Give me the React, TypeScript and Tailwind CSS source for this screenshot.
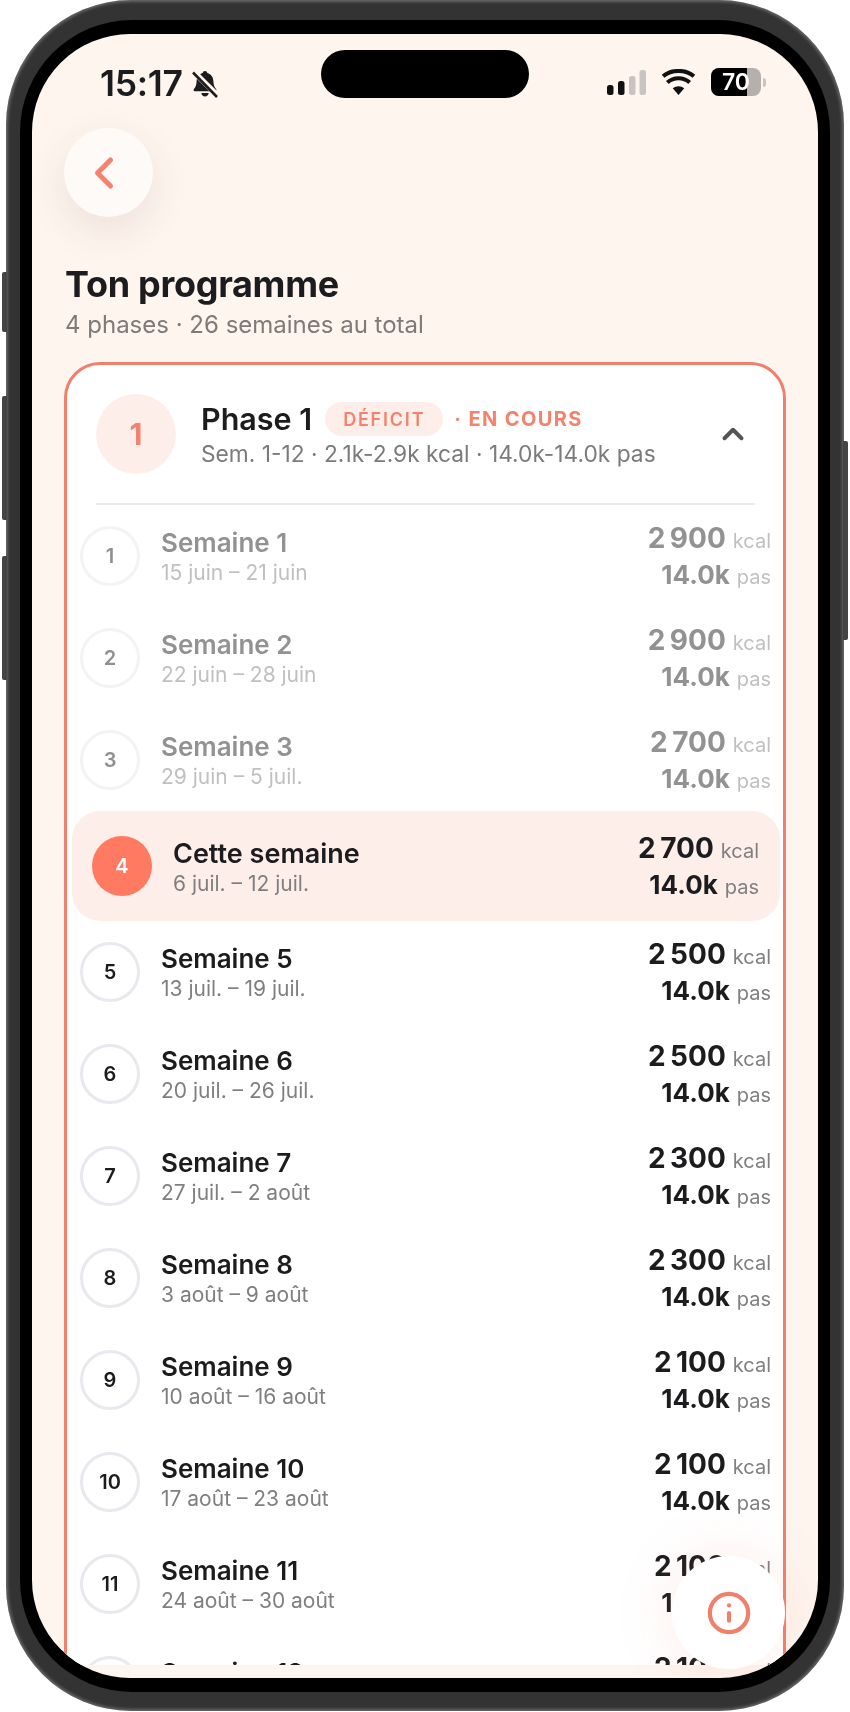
import React from "react";
import { ChevronLeft, ChevronUp, Info } from "lucide-react";

type Week = { n: number; title: string; dates: string; kcal: string; state: "past" | "now" | "next" };

const weeks: Week[] = [
  { n: 1, title: "Semaine 1", dates: "15 juin – 21 juin", kcal: "2\u202F900", state: "past" },
  { n: 2, title: "Semaine 2", dates: "22 juin – 28 juin", kcal: "2\u202F900", state: "past" },
  { n: 3, title: "Semaine 3", dates: "29 juin – 5 juil.", kcal: "2\u202F700", state: "past" },
  { n: 4, title: "Cette semaine", dates: "6 juil. – 12 juil.", kcal: "2\u202F700", state: "now" },
  { n: 5, title: "Semaine 5", dates: "13 juil. – 19 juil.", kcal: "2\u202F500", state: "next" },
  { n: 6, title: "Semaine 6", dates: "20 juil. – 26 juil.", kcal: "2\u202F500", state: "next" },
  { n: 7, title: "Semaine 7", dates: "27 juil. – 2 août", kcal: "2\u202F300", state: "next" },
  { n: 8, title: "Semaine 8", dates: "3 août – 9 août", kcal: "2\u202F300", state: "next" },
  { n: 9, title: "Semaine 9", dates: "10 août – 16 août", kcal: "2\u202F100", state: "next" },
  { n: 10, title: "Semaine 10", dates: "17 août – 23 août", kcal: "2\u202F100", state: "next" },
  { n: 11, title: "Semaine 11", dates: "24 août – 30 août", kcal: "2\u202F100", state: "next" },
  { n: 12, title: "Semaine 12", dates: "31 août – 6 sept.", kcal: "2\u202F100", state: "next" },
];

function Row({ w }: { w: Week }) {
  const now = w.state === "now";
  const past = w.state === "past";
  return (
    <div
      className={
        now
          ? "ml-[5px] mr-[3px] h-[110px] rounded-[28px] bg-[#fdeeea] flex items-center pl-[20px] pr-[21px]"
          : "h-[102px] flex items-center pl-[13px] pr-[12px]"
      }
    >
      <div
        className={
          now
            ? "w-[60px] h-[60px] rounded-full bg-[#ff7a60] text-white flex items-center justify-center text-[20px] font-semibold shrink-0"
            : past
              ? "w-[60px] h-[60px] rounded-full border-[3px] border-[#f2f3f5] text-[#8f8f8f] flex items-center justify-center text-[20px] font-semibold shrink-0"
              : "w-[60px] h-[60px] rounded-full border-[3px] border-[#e8e9ee] text-[#1c1c1e] flex items-center justify-center text-[20px] font-semibold shrink-0"
        }
      >
        {w.n}
      </div>
      <div className="ml-[21px] flex-1">
        <div
          className={
            now
              ? "mt-[2px] text-[27px] leading-[30px] font-semibold text-[#1c1c1e]"
              : past
                ? "mt-[1px] text-[26px] leading-[30px] font-semibold text-[#929292]"
                : "mt-[1px] text-[26px] leading-[30px] font-semibold text-[#1c1c1e]"
          }
        >
          {w.title}
        </div>
        <div
          className={
            past
              ? "mt-[2px] text-[21px] leading-[25px] text-[#c0c0c0]"
              : "mt-[2px] text-[21px] leading-[25px] text-[#7f7f7f]"
          }
        >
          {w.dates}
        </div>
      </div>
      <div className="flex flex-col items-end">
        <div className="h-[37px] flex items-baseline">
          <span
            className={
              past
                ? "text-[28px] leading-[36px] font-bold tracking-[0.5px] text-[#929292]"
                : "text-[28px] leading-[36px] font-bold tracking-[0.5px] text-[#1c1c1e]"
            }
          >
            {w.kcal}
          </span>
          <span
            className={
              past
                ? "ml-[7px] text-[20px] text-[#c0c0c0]"
                : "ml-[7px] text-[20px] text-[#7f7f7f]"
            }
          >
            kcal
          </span>
        </div>
        <div className="h-[36px] flex items-baseline">
          <span
            className={
              past
                ? "text-[26px] leading-[36px] font-bold text-[#929292]"
                : "text-[26px] leading-[36px] font-bold text-[#1c1c1e]"
            }
          >
            14.0k
          </span>
          <span
            className={
              past
                ? "ml-[7px] text-[20px] text-[#c0c0c0]"
                : "ml-[7px] text-[20px] text-[#7f7f7f]"
            }
          >
            pas
          </span>
        </div>
      </div>
    </div>
  );
}

function BellSlash() {
  return (
    <svg width="28" height="28" viewBox="0 0 28 28" className="ml-[8px]">
      <path
        d="M14 1c1.300 0 2.200.9 2.300 2.100 3.800 1 5.900 4.200 6.100 8.200.2 3.600.8 5.500 2.800 8 .6.8.1 1.900-1 1.900H3.800c-1.100 0-1.600-1.100-1-1.900 2-2.500 2.600-4.400 2.800-8 .2-4 2.300-7.200 6.100-8.200C11.800 1.900 12.700 1 14 1z"
        fill="#1c1c1e"
      />
      <path d="M10.300 23h7.400c-.3 2-1.800 3.500-3.700 3.500s-3.400-1.500-3.700-3.500z" fill="#1c1c1e" />
      <path d="M3.500 2.500L27 26" stroke="#fef5ef" strokeWidth="5.500" />
      <path d="M2 2.500L26 27" stroke="#1c1c1e" strokeWidth="2.600" />
    </svg>
  );
}

function StatusRight() {
  return (
    <div className="flex items-center">
      <svg width="39" height="25" viewBox="0 0 39 25">
        <rect x="0" y="15" width="6.500" height="10" rx="2.500" fill="#111" />
        <rect x="11" y="11" width="6.500" height="14" rx="2.500" fill="#111" />
        <rect x="22" y="6" width="6.500" height="19" rx="2.500" fill="#c9c4c1" />
        <rect x="32.500" y="0" width="6.500" height="25" rx="2.500" fill="#c9c4c1" />
      </svg>
      <svg width="35" height="26" viewBox="0 0 36 27" className="ml-[15px]">
        <path d="M18 27l-6-7c3.500-2.800 8.500-2.800 12 0z" fill="#111" />
        <path d="M6.400 13.900C9.500 11.100 13.600 9.500 18 9.500s8.500 1.600 11.600 4.400" stroke="#111" strokeWidth="4.200" fill="none" />
        <path d="M2 7.500C6.300 3.800 11.900 2 18 2s11.700 1.800 16 5.500" stroke="#111" strokeWidth="4.200" fill="none" />
      </svg>
      <div className="ml-[15px] flex items-center">
        <div className="relative w-[50px] h-[28px] rounded-[8px] bg-[#b5b0ad] overflow-hidden flex">
          <div className="w-[36px] h-full bg-black" />
          <div className="absolute inset-0 flex items-center justify-center text-white text-[23px] font-semibold">
            70
          </div>
        </div>
        <div className="ml-[2px] w-[3px] h-[9px] rounded-r-full bg-[#c9c4c1]" />
      </div>
    </div>
  );
}

export default function App() {
  return (
    <div className="w-[850px] h-[1712px] overflow-hidden bg-white font-['Inter',sans-serif] relative blur-[0.4px]">
      <div className="absolute left-[2px] top-[272px] w-[5px] h-[60px] bg-[#444] rounded-l-[2px]" />
      <div className="absolute left-[2px] top-[396px] w-[5px] h-[124px] bg-[#444] rounded-l-[2px]" />
      <div className="absolute left-[2px] top-[556px] w-[5px] h-[124px] bg-[#444] rounded-l-[2px]" />
      <div className="absolute left-[843px] top-[441px] w-[5px] h-[199px] bg-[#444] rounded-r-[2px]" />

      <div className="ml-[6px] w-[838px] h-[1711px] bg-[#333333] rounded-[125px] pt-[20px] pb-[19px] px-[14px] shadow-[inset_0_0_3px_2px_rgba(255,255,255,0.25)]">
        <div className="w-full h-full bg-black rounded-[112px] px-[12px] py-[14px]">
          <div className="relative w-full h-full rounded-[98px] overflow-hidden bg-[#fef5ef]">
            <div className="h-[1631px] overflow-hidden">
              <div className="h-[82px] flex items-start pt-[34px] pl-[68px] pr-[52px]">
                <div className="flex items-center w-[221px] h-[32px]">
                  <span className="text-[35.500px] leading-[32px] font-semibold text-[#1c1c1e] tracking-[-0.3px]">
                    15:17
                  </span>
                  <BellSlash />
                </div>
                <div className="-mt-[18px] w-[208px] h-[48px] rounded-full bg-black" />
                <div className="ml-auto">
                  <StatusRight />
                </div>
              </div>

              <div className="mt-[12px] ml-[32px] w-[89px] h-[89px] rounded-full bg-[#fefaf7] flex items-center justify-center shadow-[0_14px_40px_rgba(90,60,40,0.10)]">
                <ChevronLeft size={52} strokeWidth={2.300} className="text-[#f4826e] -ml-[10px]" />
              </div>

              <div className="mt-[46px] ml-[33px] text-[36px] leading-[42px] font-bold text-[#1c1c1e] tracking-[-0.3px]">
                Ton programme
              </div>
              <div className="mt-[5px] ml-[33px] text-[24px] leading-[30px] text-[#7d7a78]">
                4 phases · 26 semaines au total
              </div>

              <div className="mt-[22px] mx-[32px] rounded-[36px] border-[3px] border-[#f0806c] bg-white">
                <div className="ml-[29px] mr-[28px] h-[140px] border-b-2 border-[#e9eaee] flex items-start pt-[29px]">
                  <div className="w-[80px] h-[80px] rounded-full bg-[#fdeeea] text-[#f4826e] flex items-center justify-center text-[30px] font-bold shrink-0">
                    1
                  </div>
                  <div className="ml-[25px] flex-1">
                    <div className="flex items-center h-[36px] mt-[7px]">
                      <span className="text-[30.500px] leading-[36px] font-semibold text-[#1c1c1e]">Phase 1</span>
                      <span className="ml-[13px] h-[34px] w-[118px] rounded-full bg-[#fdeeea] text-[#f4826e] text-[18px] font-semibold tracking-[1.8px] flex items-center justify-center">
                        DÉFICIT
                      </span>
                      <span className="ml-[11px] text-[#f4826e] text-[20px] font-bold tracking-[1.4px]">
                        · EN COURS
                      </span>
                    </div>
                    <div className="mt-[3px] text-[22.750px] leading-[28px] text-[#7b7b7b]">
                      Sem. 1-12 · 2.1k-2.9k kcal · 14.0k-14.0k pas
                    </div>
                  </div>
                  <ChevronUp size={34} strokeWidth={2.800} className="text-[#555555] mt-[23px] mr-[5px]" />
                </div>
                <div>
                  {weeks.map((w) => (
                    <Row key={w.n} w={w} />
                  ))}
                </div>
              </div>
            </div>

            <div className="absolute left-[640px] top-[1522px] w-[113px] h-[113px] rounded-full bg-white flex items-center justify-center shadow-[0_0_60px_rgba(244,130,110,0.16)]">
              <Info size={46} strokeWidth={2.200} className="text-[#f0806c]" />
            </div>
          </div>
        </div>
      </div>
    </div>
  );
}
